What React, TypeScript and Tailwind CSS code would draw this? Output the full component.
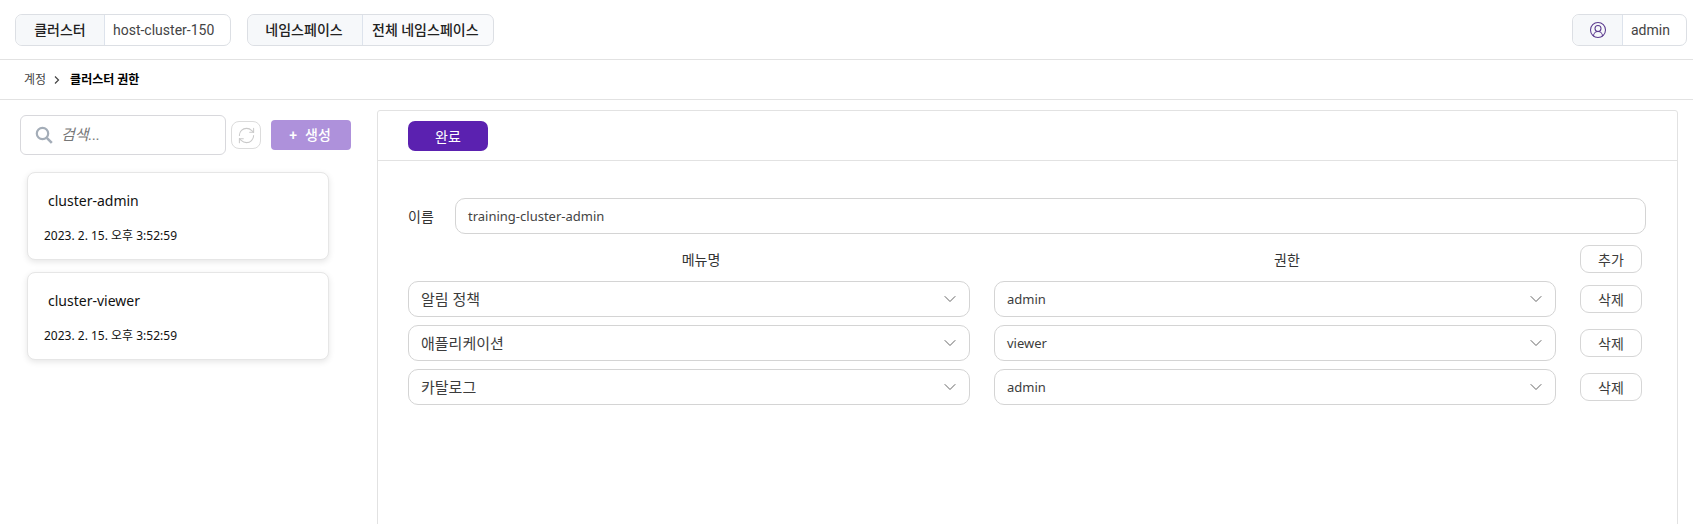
import { ChevronDown, CircleUserRound, RefreshCw } from 'lucide-react';

const roboto = "font-['Roboto','Noto_Sans_CJK_KR',sans-serif]";
const noto = "font-['Noto_Sans','Noto_Sans_CJK_KR',sans-serif]";

const cards = [
  { name: 'cluster-admin', date: '2023. 2. 15. 오후 3:52:59' },
  { name: 'cluster-viewer', date: '2023. 2. 15. 오후 3:52:59' },
];

const rows = [
  { menu: '알림 정책', role: 'admin' },
  { menu: '애플리케이션', role: 'viewer' },
  { menu: '카탈로그', role: 'admin' },
];

const Select = ({ value, className }: { value: string; className: string }) => (
  <div
    className={`flex h-[36px] w-[562px] items-center justify-between rounded-[10px] border border-[#d4d4d4] bg-white pl-[12px] pr-[9px] text-[#3c3c3c] ${className}`}
  >
    <span>{value}</span>
    <ChevronDown size={20} strokeWidth={1.2} className="text-[#666]" />
  </div>
);

const SmallButton = ({ label }: { label: string }) => (
  <button
    type="button"
    className="h-[28px] w-[62px] rounded-[9px] border border-[#d6d6d6] bg-white text-[14px] text-[#3c3c3c]"
  >
    {label}
  </button>
);

const App = () => (
  <div className={`flex h-[524px] flex-col overflow-hidden bg-white ${roboto}`}>
    <header className="flex h-[60px] shrink-0 items-start justify-between border-b border-[#e2e2e2] pl-[15px] pr-[6px] pt-[14px]">
      <div className="flex gap-[16px]">
        <div className="flex h-[32px] w-[216px] rounded-[7px] border border-[#dcdfe4] bg-white text-[14px]">
          <div className="flex w-[89px] items-center justify-center rounded-l-[7px] border-r border-[#dde3ec] bg-[#f6f8fa] font-medium text-[#222]">
            클러스터
          </div>
          <div className="flex flex-1 items-center pl-[8px] text-[#444]">host-cluster-150</div>
        </div>
        <div className="flex h-[32px] w-[247px] rounded-[7px] border border-[#dcdfe4] bg-[#f9fafc] text-[14px] font-medium text-[#222]">
          <div className="flex w-[115px] items-center justify-center rounded-l-[7px] border-r border-[#dde3ec] bg-[#f6f8fa] pr-[2px]">
            네임스페이스
          </div>
          <div className="flex flex-1 items-center pl-[9px]">전체 네임스페이스</div>
        </div>
      </div>
      <div className="flex h-[32px] w-[115px] rounded-[7px] border border-[#dcdfe4] bg-white text-[14px] text-[#444]">
        <div className="flex w-[50px] items-center justify-center rounded-l-[7px] border-r border-[#dde3ec] bg-[#f6f8fa]">
          <CircleUserRound size={18} strokeWidth={1.4} className="text-[#5b3a8e]" />
        </div>
        <div className="flex flex-1 items-center pl-[8px]">admin</div>
      </div>
    </header>

    <nav className="flex h-[40px] shrink-0 items-center border-b border-[#e2e2e2] pl-[24px] text-[12px]">
      <span className="text-[#444]">계정</span>
      <svg width="6" height="8" viewBox="0 0 6 8" className="ml-[8px] mr-[10px]">
        <path d="M1 .5 4.500 4 1 7.500" fill="none" stroke="#444" strokeWidth="1.200" />
      </svg>
      <span className="font-bold text-black">클러스터 권한</span>
    </nav>

    <main className="flex min-h-0 flex-1">
      <aside className="w-[377px] shrink-0 pl-[20px] pt-[15px]">
        <div className="flex items-center">
          <div className="flex h-[40px] w-[206px] items-center rounded-[6px] border border-[#d8d8dc] pl-[14px]">
            <svg width="18" height="18" viewBox="0 0 18 18" fill="none" stroke="#a4adb8" strokeWidth="2.200">
              <circle cx="7.500" cy="7.500" r="5.700" />
              <path d="m11.800 11.800 5 5" strokeWidth="2.600" />
            </svg>
            <span className="ml-[8px] text-[15px] italic text-[#777]">검색...</span>
          </div>
          <div className="ml-[5px] flex h-[28px] w-[30px] items-center justify-center rounded-[8px] border border-[#dcdcdc]">
            <RefreshCw size={19} strokeWidth={1.3} className="text-[#c9c9c9]" />
          </div>
          <button
            type="button"
            className="ml-[10px] flex h-[30px] w-[80px] items-center justify-center gap-[8px] rounded-[4px] bg-[#ae91db] pr-[2px] text-[14px] font-medium text-white"
          >
            <span>+</span>
            <span>생성</span>
          </button>
        </div>
        <div className={`ml-[7px] mt-[17px] flex w-[302px] flex-col gap-[12px] ${noto}`}>
          {cards.map((card) => (
            <div
              key={card.name}
              className="h-[88px] rounded-[8px] border border-[#e6e6e6] bg-white pl-[20px] pt-[18px] shadow-[0_2px_6px_rgba(0,0,0,0.1)]"
            >
              <div className="text-[14px] leading-[20px] text-[#111]">{card.name}</div>
              <div className="-ml-[4px] mt-[16px] text-[12px] leading-[18px] text-[#111]">{card.date}</div>
            </div>
          ))}
        </div>
      </aside>

      <section className={`mb-[-10px] mr-[15px] mt-[10px] flex flex-1 flex-col rounded-t-[3px] border border-[#e2e2e2] ${noto}`}>
        <div className="h-[50px] shrink-0 border-b border-[#e2e2e2] pl-[30px] pt-[10px]">
          <button
            type="button"
            className="h-[30px] w-[80px] rounded-[7px] bg-[#5b21b0] text-[14px] text-white"
          >
            완료
          </button>
        </div>

        <div className="pl-[30px] pr-[31px] pt-[37px]">
          <div className="flex items-center">
            <span className="w-[47px] text-[14px] text-[#333]">이름</span>
            <div className="flex h-[36px] flex-1 items-center rounded-[10px] border border-[#d4d4d4] pl-[12px] pt-[1px] text-[13px] text-[#444]">
              training-cluster-admin
            </div>
          </div>

          <div className="mt-[11px] flex h-[28px] items-center text-[14px] text-[#333]">
            <div className="w-[586px] text-center">메뉴명</div>
            <div className="w-[586px] text-center">권한</div>
            <SmallButton label="추가" />
          </div>

          <div className="mt-[8px] flex flex-col gap-[8px]">
            {rows.map((row) => (
              <div key={row.menu} className="flex items-center">
                <Select value={row.menu} className="text-[15px]" />
                <Select value={row.role} className="ml-[24px] text-[13px] leading-[22px]" />
                <div className="ml-[24px]">
                  <SmallButton label="삭제" />
                </div>
              </div>
            ))}
          </div>
        </div>
      </section>
    </main>
  </div>
);

export default App;
